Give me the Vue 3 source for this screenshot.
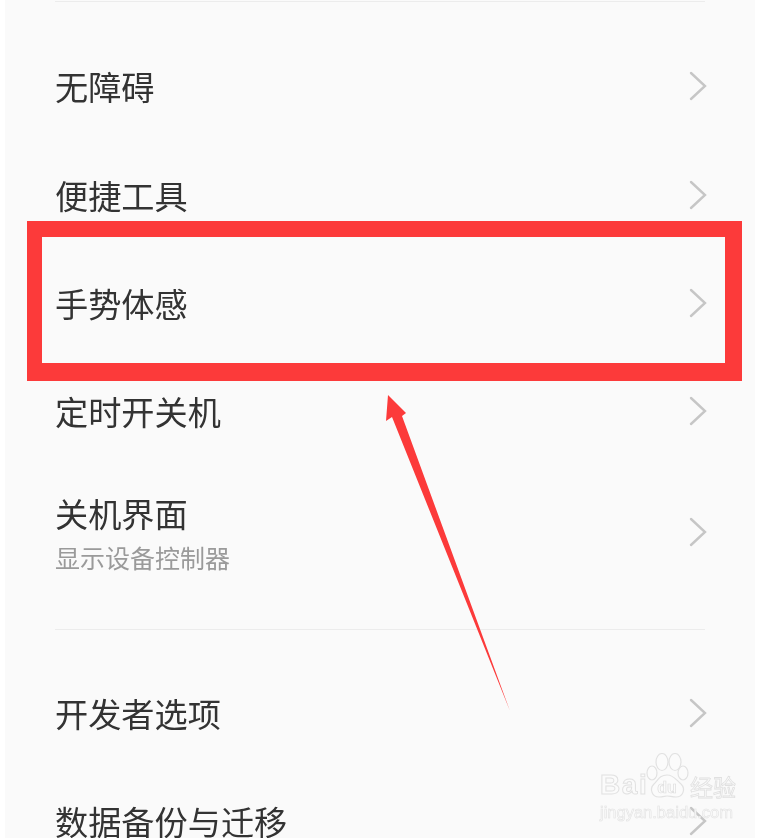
<script setup>
const group1 = [
  { title: '无障碍', h: 108 },
  { title: '便捷工具', h: 109 },
  { title: '手势体感', h: 108 },
  { title: '定时开关机', h: 108 },
  { title: '关机界面', sub: '显示设备控制器', h: 133 },
]
const group2 = [
  { title: '开发者选项', h: 108 },
  { title: '数据备份与迁移', h: 108 },
]
</script>

<template>
  <div class="page">
    <div class="panel">
      <div class="divider first"></div>
      <div class="group top-group">
        <div v-for="r in group1" :key="r.title" class="row" :style="{ height: r.h + 'px' }">
          <div class="labels" :class="{ double: r.sub }">
            <div class="title">{{ r.title }}</div>
            <div v-if="r.sub" class="sub">{{ r.sub }}</div>
          </div>
          <svg class="chev" width="18" height="30" viewBox="0 0 18 30">
            <path d="M2 2 L16 15 L2 28" fill="none" stroke="#c6c6c6" stroke-width="2.4" stroke-linecap="round" stroke-linejoin="miter" />
          </svg>
        </div>
      </div>
      <div class="divider second"></div>
      <div class="group">
        <div v-for="r in group2" :key="r.title" class="row" :style="{ height: r.h + 'px' }">
          <div class="labels"><div class="title">{{ r.title }}</div></div>
          <svg class="chev" width="18" height="30" viewBox="0 0 18 30">
            <path d="M2 2 L16 15 L2 28" fill="none" stroke="#c6c6c6" stroke-width="2.4" stroke-linecap="round" />
          </svg>
        </div>
      </div>
    </div>

    <div class="frame"></div>

    <svg class="arrow" width="780" height="838" viewBox="0 0 780 838">
      <polygon points="388,395 406,413 402,416 510,711 392,417 386,421" fill="#fc3a3a" />
    </svg>

    <div class="mark">
      <div class="mark-top">
        <span class="bai">Bai</span>
        <svg class="paw" width="44" height="46" viewBox="0 0 44 46">
          <g fill="#fbfbfb" stroke="#e2e2e2" stroke-width="1.2">
            <ellipse cx="7" cy="20" rx="5" ry="7" />
            <ellipse cx="17" cy="9" rx="6" ry="8.5" />
            <ellipse cx="30" cy="9" rx="6" ry="8.5" />
            <ellipse cx="38" cy="20" rx="5" ry="7" />
            <path d="M22 22 C15 22 13 27 9 31 C4 36 7 44 14 44 C18 44 20 43 22 43 C25 43 27 44 31 44 C38 44 41 36 36 31 C31 27 29 22 22 22 Z" />
          </g>
          <text x="22" y="40" text-anchor="middle" class="du">du</text>
        </svg>
        <span class="jy">经验</span>
      </div>
      <div class="url">jingyan.baidu.com</div>
    </div>
  </div>
</template>

<style scoped>
.page {
  position: relative;
  width: 780px;
  height: 838px;
  overflow: hidden;
  background: #ffffff;
  font-family: "Noto Sans CJK SC", "Noto Sans", sans-serif;
}
.panel {
  margin-left: 5px;
  width: 750px;
  height: 838px;
  box-sizing: border-box;
  padding: 1px 50px 0;
  background: #fafafa;
}
.divider {
  height: 1px;
  background: #ececec;
}
.first {
  margin-bottom: 30px;
}
.second {
  margin: 31px 0 29px;
}
.row {
  display: flex;
  align-items: center;
  justify-content: space-between;
}
.labels {
  display: flex;
  flex-direction: column;
  filter: blur(0.3px);
}
.labels.double {
  padding-top: 6px;
}
.title {
  font-size: 33.2px;
  line-height: 44px;
  color: #333333;
}
.sub {
  font-size: 25px;
  line-height: 44px;
  color: #9a9a9a;
}
.chev {
  margin-right: -2px;
  flex: none;
}
.frame {
  position: absolute;
  left: 27px;
  top: 221px;
  width: 683px;
  height: 126px;
  border-style: solid;
  border-color: #fc3a3a;
  border-width: 16px 17px 18px 15px;
}
.arrow {
  position: absolute;
  left: 0;
  top: 0;
}
.mark {
  position: absolute;
  left: 600px;
  top: 753px;
  width: 138px;
  filter: blur(0.3px);
}
.mark-top {
  display: flex;
  align-items: flex-start;
  height: 46px;
}
.bai {
  width: 45px;
  margin-top: 19px;
  font-family: "Liberation Sans", sans-serif;
  font-weight: 700;
  font-size: 28px;
  line-height: 26px;
  letter-spacing: 1.6px;
  color: #fbfbfb;
  -webkit-text-stroke: 1px #e2e2e2;
}
.paw {
  flex: none;
}
.du {
  font-family: "Liberation Sans", sans-serif;
  font-size: 16px;
  font-weight: 700;
  fill: #fbfbfb;
  stroke: #dedede;
  stroke-width: 0.7px;
}
.jy {
  margin-top: 19px;
  margin-left: 1px;
  font-size: 23px;
  line-height: 28px;
  color: #fbfbfb;
  -webkit-text-stroke: 0.8px #e0e0e0;
  white-space: nowrap;
}
.url {
  margin-top: 4px;
  font-family: "Liberation Sans", sans-serif;
  font-size: 16.5px;
  line-height: 18px;
  color: #fbfbfb;
  -webkit-text-stroke: 0.6px #e2e2e2;
  white-space: nowrap;
}
</style>
